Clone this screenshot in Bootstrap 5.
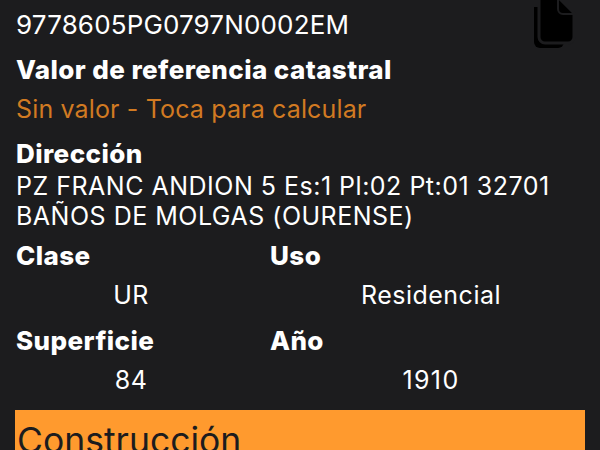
<!DOCTYPE html>
<html lang="es"><head><meta charset="utf-8">
<link href="https://cdn.jsdelivr.net/npm/bootstrap@5.3.0/dist/css/bootstrap.min.css" rel="stylesheet">
<style>
html,body{background:#1c1c1e;height:450px;overflow:hidden}
body{font-family:"Inter","Liberation Sans",sans-serif;color:#fff;font-size:25px;line-height:30px;padding:10px 15px 0 16px}
.topline{height:30px;font-size:26px;letter-spacing:.15px}
.heading-b{font-weight:800;font-size:26px;line-height:30px;letter-spacing:.42px}
.orange-t{color:#d17a22;letter-spacing:.15px}
.ref-h{margin-top:15px}
.orange-l{margin-top:9px}
.dir-h{margin-top:15px}
.addr{letter-spacing:.5px;margin-top:2px}
.cell{flex:0 0 254px}
.val{text-align:center;letter-spacing:.5px}
.val-num{letter-spacing:1.4px}
.val-a{width:230px}
.val-b{width:322px}
.gap-a{margin-top:10px}
.gap-b{margin-top:9px}
.gap-c{margin-top:16px}
.band{background:#ff9a2e;color:#1c1c1e;margin:15px 0 0 -1px;height:60px;font-size:35.5px;line-height:44px;padding:9px 2px}
.ico{width:50px;height:50px;margin-top:-10px;margin-right:6px}
</style></head><body>
<div class="d-flex justify-content-between align-items-start topline"><div>9778605PG0797N0002EM</div>
<svg class="ico" viewBox="0 0 50 50"><path d="M5 7h30v35a6 6 0 0 1-6 6H11a6 6 0 0 1-6-6z" fill="#000"/><path d="M10 -2h20l15 15v24a6 6 0 0 1-6 6H16a6 6 0 0 1-6-6z" fill="#000" stroke="#1c1c1e" stroke-width="3"/><path d="M29 -2v11a5 5 0 0 0 5 5h11" fill="none" stroke="#1c1c1e" stroke-width="2"/></svg></div>
<div class="heading-b ref-h">Valor de referencia catastral</div>
<div class="orange-t orange-l">Sin valor - Toca para calcular</div>
<div class="heading-b dir-h">Dirección</div>
<div class="addr">PZ FRANC ANDION 5 Es:1 Pl:02 Pt:01 32701<br>BAÑOS DE MOLGAS (OURENSE)</div>
<div class="d-flex gap-a"><div class="cell"><div class="heading-b">Clase</div></div><div class="cell"><div class="heading-b">Uso</div></div></div>
<div class="d-flex gap-b"><div class="cell"><div class="val val-a">UR</div></div><div class="cell"><div class="val val-b">Residencial</div></div></div>
<div class="d-flex gap-c"><div class="cell"><div class="heading-b">Superficie</div></div><div class="cell"><div class="heading-b">Año</div></div></div>
<div class="d-flex gap-b"><div class="cell"><div class="val val-a">84</div></div><div class="cell"><div class="val val-b val-num">1910</div></div></div>
<div class="band">Construcción</div>
</body></html>
